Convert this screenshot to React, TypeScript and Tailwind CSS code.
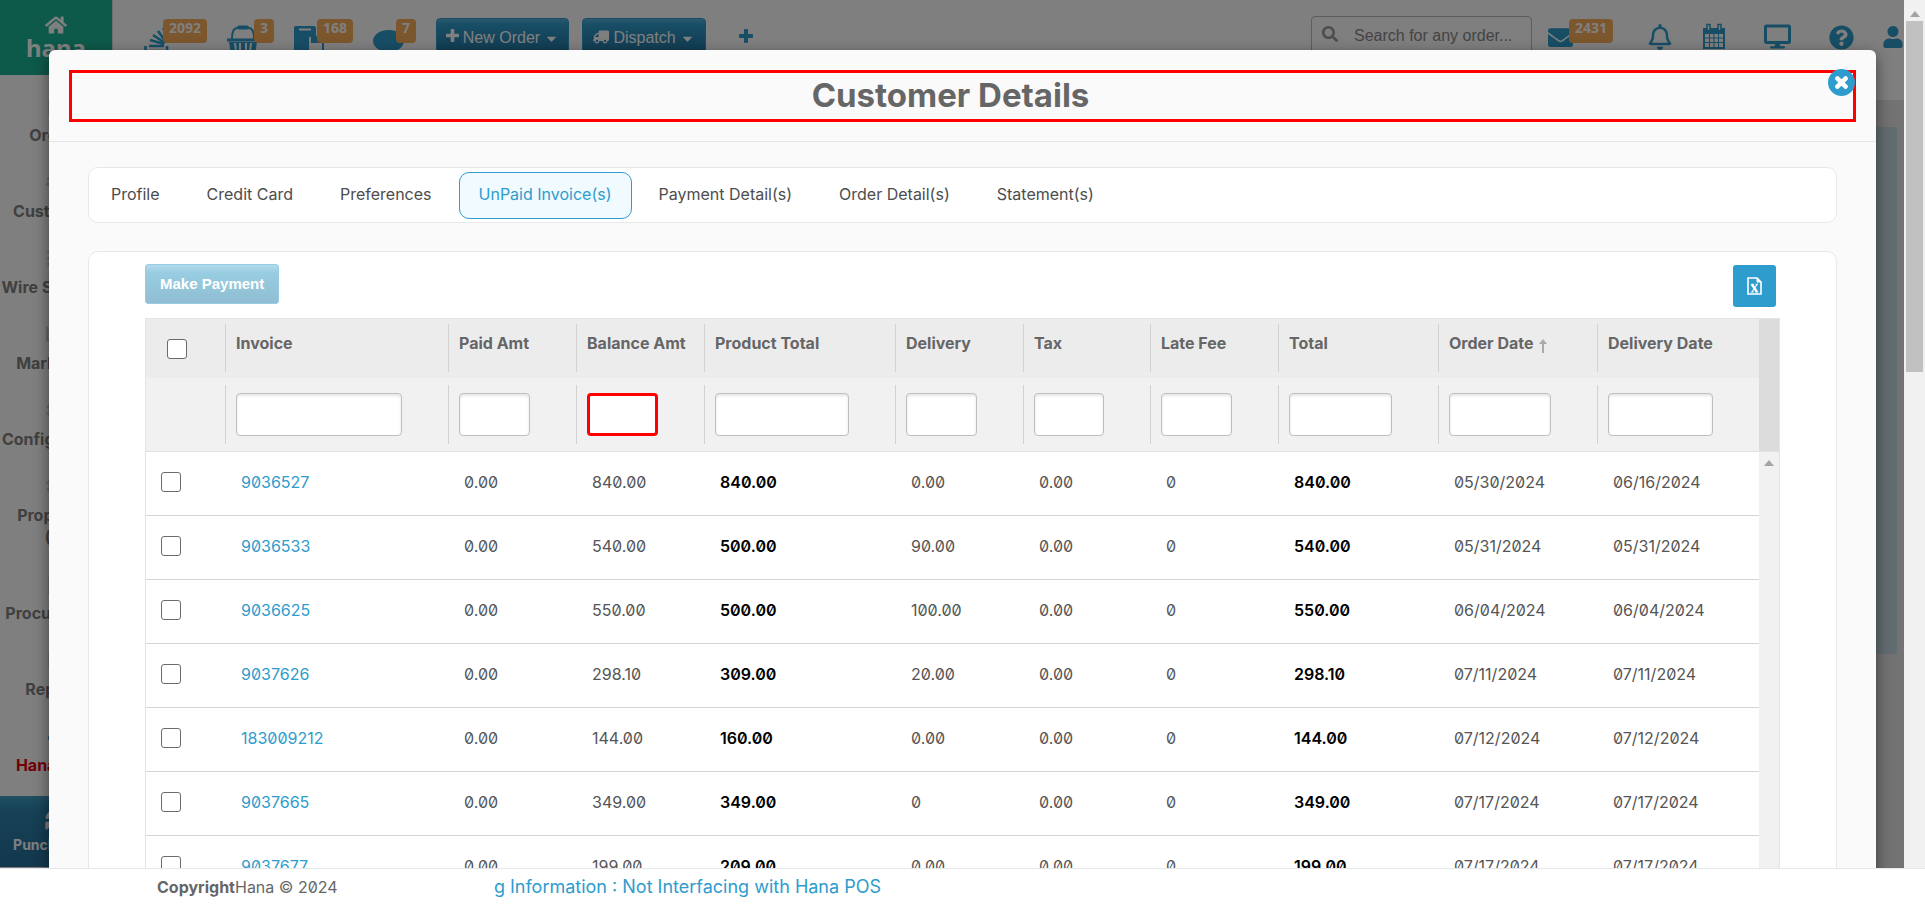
import type { ReactNode } from 'react'
import {
  FaBars,
  FaBuilding,
  FaCaretDown,
  FaChartBar,
  FaClipboardList,
  FaCloud,
  FaCog,
  FaDesktop,
  FaEnvelope,
  FaFileInvoice,
  FaHome,
  FaQuestionCircle,
  FaRegBell,
  FaSearch,
  FaSyncAlt,
  FaTimes,
  FaTruck,
  FaUser,
  FaUsers,
} from 'react-icons/fa'

type Row = {
  invoice: string
  paid: string
  balance: string
  product: string
  delivery: string
  tax: string
  late: string
  total: string
  ordered: string
  delivered: string
}

const rows: Row[] = [
  { invoice: '9036527', paid: '0.00', balance: '840.00', product: '840.00', delivery: '0.00', tax: '0.00', late: '0', total: '840.00', ordered: '05/30/2024', delivered: '06/16/2024' },
  { invoice: '9036533', paid: '0.00', balance: '540.00', product: '500.00', delivery: '90.00', tax: '0.00', late: '0', total: '540.00', ordered: '05/31/2024', delivered: '05/31/2024' },
  { invoice: '9036625', paid: '0.00', balance: '550.00', product: '500.00', delivery: '100.00', tax: '0.00', late: '0', total: '550.00', ordered: '06/04/2024', delivered: '06/04/2024' },
  { invoice: '9037626', paid: '0.00', balance: '298.10', product: '309.00', delivery: '20.00', tax: '0.00', late: '0', total: '298.10', ordered: '07/11/2024', delivered: '07/11/2024' },
  { invoice: '183009212', paid: '0.00', balance: '144.00', product: '160.00', delivery: '0.00', tax: '0.00', late: '0', total: '144.00', ordered: '07/12/2024', delivered: '07/12/2024' },
  { invoice: '9037665', paid: '0.00', balance: '349.00', product: '349.00', delivery: '0', tax: '0.00', late: '0', total: '349.00', ordered: '07/17/2024', delivered: '07/17/2024' },
  { invoice: '9037677', paid: '0.00', balance: '199.00', product: '209.00', delivery: '0.00', tax: '0.00', late: '0', total: '199.00', ordered: '07/17/2024', delivered: '07/17/2024' },
]

const columns = [
  { label: 'Invoice', col: 'w-[223px]' },
  { label: 'Paid Amt', col: 'w-[128px]' },
  { label: 'Balance Amt', col: 'w-[128px]' },
  { label: 'Product Total', col: 'w-[191px]' },
  { label: 'Delivery', col: 'w-[128px]' },
  { label: 'Tax', col: 'w-[127px]' },
  { label: 'Late Fee', col: 'w-[128px]' },
  { label: 'Total', col: 'w-[160px]' },
  { label: 'Order Date', col: 'w-[159px]' },
  { label: 'Delivery Date', col: 'w-[162px]' },
]

const tabs = ['Profile', 'Credit Card', 'Preferences', 'UnPaid Invoice(s)', 'Payment Detail(s)', 'Order Detail(s)', 'Statement(s)']

const menu = [
  { label: 'Orders', icon: <FaClipboardList /> },
  { label: 'Customers', icon: <FaUsers /> },
  { label: 'Wire Services', icon: <FaBars /> },
  { label: 'Marketing', icon: <FaChartBar /> },
  { label: 'Configuration', icon: <FaCog /> },
  { label: 'Proposals (3)', icon: <FaCog /> },
  { label: 'Procurement', icon: <FaBuilding /> },
  { label: 'Reports', icon: <FaFileInvoice /> },
]

function Badge({ children }: { children: ReactNode }) {
  return (
    <span className="absolute top-[19px] h-6 rounded bg-[#f8ac59] px-[6px] font-['Open_Sans',sans-serif] text-sm leading-[18px] font-bold text-white">
      {children}
    </span>
  )
}

function PlusIcon({ className }: { className: string }) {
  return (
    <svg viewBox="0 0 14 14" className={className} fill="currentColor">
      <path d="M5 1q0-1 1-1h2q1 0 1 1v4h4q1 0 1 1v2q0 1-1 1H9v4q0 1-1 1H6q-1 0-1-1V9H1Q0 9 0 8V6q0-1 1-1h4z" />
    </svg>
  )
}

function Check({ label }: { label: string }) {
  return (
    <input
      type="checkbox"
      aria-label={label}
      className="block size-5 appearance-none rounded-[3px] border border-[#6b6b6b] bg-white checked:bg-[#2e9ccc]"
    />
  )
}

function OpenOrdersIcon() {
  return (
    <svg viewBox="0 0 26 26" className="h-[26px] w-[26px]" fill="none" stroke="#2e9ccc" strokeWidth="2.6">
      <path d="M1.5 19v7M23 19v7M5 19h15M5 24h15M6 13l14 4M9 8l12 8M14 4l8 11M19 1l5 8" />
    </svg>
  )
}

function BasketIcon() {
  return (
    <svg viewBox="0 0 34 30" className="h-[30px] w-[34px]" fill="none" stroke="#2e9ccc">
      <path d="M6 14C6 5 8 3 11 3h3M28 14c0-9-2-11-5-11h-3" strokeWidth="2" />
      <path d="M13 2.5h8" strokeWidth="4" strokeLinecap="round" />
      <path d="M1 13.5h32v3H1zM3 17h28l-2 13H5z" fill="#2e9ccc" stroke="none" />
      <path d="M9 18l1 9M14 18v9M20 18v9M25 18l-1 9" stroke="#fff" strokeWidth="2" />
    </svg>
  )
}

function StoreIcon() {
  return (
    <svg viewBox="0 0 30 30" className="h-[30px] w-[30px]">
      <path d="M2 0h18q2 0 2 2v8h4l4 5v15H0V2q0-2 2-2z" fill="#2e9ccc" />
      <path d="M5 2.5h12v2H5zM15 11h2v6h11v9H15z" fill="#fff" />
    </svg>
  )
}

function CalendarIcon() {
  return (
    <svg viewBox="0 0 24 26" className="h-[26px] w-6">
      <path d="M1 5h22v21H1z" fill="#2e9ccc" />
      <path d="M5 1.5h3v6H5zM16 1.5h3v6h-3z" fill="#fff" stroke="#2e9ccc" strokeWidth="1.5" />
      <path d="M3 11h4v3.500H3zM8 11h3.500v3.500H8zM12.500 11H16v3.500h-3.500zM17 11h4v3.500h-4zM3 15.500h4V19H3zM8 15.500h3.500V19H8zM12.500 15.500H16V19h-3.500zM17 15.500h4V19h-4zM3 20h4v4H3zM8 20h3.500v4H8zM12.500 20H16v4h-3.500zM17 20h4v4h-4z" fill="#fff" />
    </svg>
  )
}

function ExcelIcon() {
  return (
    <svg viewBox="0 0 15 18" className="h-[18px] w-[15px]" fill="none" stroke="#fff">
      <path d="M1 1h9l4 4v12H1z" strokeWidth="1.600" />
      <path d="M10 1v4h4z" fill="#fff" />
      <path d="M5 7.500l5 7.500" strokeWidth="2.400" />
      <path d="M10 7.500L5 15M3.800 7.200h3M8.500 7.200h2.500M3.800 15h3M8.500 15h2.800" strokeWidth="1.100" />
    </svg>
  )
}

function TopBar() {
  const action =
    "absolute top-[18px] flex h-10 items-start gap-1 rounded-[4px] border border-[#2e9ccc] bg-linear-to-b from-[#55b3d9] via-[#2e9ccc] via-15% to-[#24709a] pt-[7px] font-['Liberation_Sans',Arial,sans-serif] text-base text-white"
  return (
    <header className="flex h-[100px] shrink-0 bg-white text-[#2e9ccc]">
      <a href="#home" className="flex h-[75px] w-28 flex-col items-center bg-[#1ab394] pt-[14px] text-white">
        <FaHome size={22} />
        <span className="font-['Noto_Sans',sans-serif] text-2xl leading-6 font-bold">hana</span>
      </a>
      <nav aria-label="Queues" className="relative flex-1 border-l border-[#ddd]">
        <a href="#open" aria-label="Open orders" className="absolute top-[27px] left-[31px]"><OpenOrdersIcon /></a>
        <span className="absolute left-[50px]"><Badge>2092</Badge></span>
        <a href="#basket" aria-label="Basket" className="absolute top-[25px] left-[113px]"><BasketIcon /></a>
        <span className="absolute left-[141px]"><Badge>3</Badge></span>
        <a href="#store" aria-label="Store" className="absolute top-[26px] left-[181px]"><StoreIcon /></a>
        <span className="absolute left-[204px]"><Badge>168</Badge></span>
        <a href="#chat" aria-label="Chats" className="absolute top-[30px] left-[260px] h-[22px] w-[31px] rounded-[50%] bg-[#2e9ccc]" />
        <span className="absolute left-[283px]"><Badge>7</Badge></span>
        <button type="button" className={`${action} left-[323px] w-[133px] justify-center`}>
          <PlusIcon className="mt-[3px] size-[13px]" />New Order<FaCaretDown size={15} className="mt-[5px]" />
        </button>
        <button type="button" className={`${action} left-[469px] w-[124px] justify-center`}>
          <FaTruck size={16} className="mt-[3px] -scale-x-100" />Dispatch<FaCaretDown size={15} className="mt-[5px]" />
        </button>
        <button type="button" aria-label="Add" className="absolute top-[29px] left-[626px]"><PlusIcon className="size-[14px]" /></button>
      </nav>
      <div className="relative w-[593px] shrink-0">
        <label className="absolute top-4 left-0 flex h-10 w-[221px] items-center gap-4 rounded border border-[#bbb] pl-[10px] text-[#999]">
          <FaSearch size={16} className="mb-1" />
          <input aria-label="Search" placeholder="Search for any order..." className="w-[170px] font-['Liberation_Sans',Arial,sans-serif] text-base outline-none placeholder:text-[#888]" />
        </label>
        <FaEnvelope size={25} className="absolute top-[25px] left-[237px]" />
        <span className="absolute left-[258px]"><Badge>2431</Badge></span>
        <FaRegBell size={26} className="absolute top-6 left-[336px]" />
        <span className="absolute top-[23px] left-[391px]"><CalendarIcon /></span>
        <FaDesktop size={27} className="absolute top-[23px] left-[453px]" />
        <FaQuestionCircle size={25} className="absolute top-[25px] left-[518px]" />
        <FaUser size={22} className="absolute top-[26px] left-[571px]" />
      </div>
    </header>
  )
}

function SideMenu() {
  return (
    <nav aria-label="Main" className="-mt-6 flex w-28 shrink-0 flex-col text-center text-base leading-[22px] font-bold text-[#808080]">
      {menu.map((item) => (
        <a key={item.label} href="#section" className="flex flex-col items-center gap-1 pt-4 pb-[6px] whitespace-nowrap">
          <span className="flex h-7 items-center text-xl text-[#d0d0d0]">{item.icon}</span>
          {item.label.split(' (').map((part, i) => (
            <span key={part} className={i ? '-mt-1' : ''}>{i ? `(${part}` : part}</span>
          ))}
        </a>
      ))}
      <a href="#help" className="flex flex-col items-center gap-1 pt-4 pb-5 text-[#e6000c]">
        <span className="flex h-7 items-center text-base text-[#2e9ccc]"><FaCloud /></span>
        Hana Help
      </a>
      <button type="button" className="flex h-[71px] flex-col items-center justify-center gap-1 bg-linear-to-b from-[#3fa0c4] via-[#2e84ac] via-20% to-[#256f9c] text-sm font-bold text-white">
        <FaSyncAlt size={22} />
        Punch Clock
      </button>
    </nav>
  )
}

function InvoiceTable() {
  return (
    <div className="mt-[11px] flex border border-[#e4e4e4]">
      <table className="w-full table-fixed border-separate border-spacing-0 text-left text-[#555] slashed-zero">
        <colgroup>
          <col className="w-[79px]" />
          {columns.map((c) => (
            <col key={c.label} className={c.col} />
          ))}
        </colgroup>
        <thead>
          <tr className="bg-[#ececec]">
            <th className="h-[59px] py-[5px] pl-[21px] align-middle"><Check label="Select all invoices" /></th>
            {columns.map((c) => (
              <th key={c.label} className="py-[5px] align-top text-base font-bold whitespace-nowrap text-[#666]">
                <div className="flex h-12 border-l border-[#d2d2d2] pt-2 pl-[10px] leading-[22px]">
                  {c.label}
                  {c.label === 'Order Date' && (
                    <svg viewBox="0 0 8 14" className="mt-[7px] ml-[6px] h-[14px] w-2" fill="#aaa">
                      <path d="M4 0l4 5H5v9H3V5H0z" />
                    </svg>
                  )}
                </div>
              </th>
            ))}
          </tr>
          <tr className="bg-[#f1f1f1]">
            <td className="border-b border-[#e2e2e2]" />
            {columns.map((c) => (
              <td key={c.label} className="border-b border-[#e2e2e2] py-[7px]">
                <div className="h-[59px] border-l border-[#d2d2d2] pt-2 pr-[46px] pl-[10px]">
                  <input
                    aria-label={`Filter ${c.label}`}
                    className={
                      c.label === 'Balance Amt'
                        ? 'block h-[43px] w-full rounded border-3 border-[#ff0000] bg-white px-2 outline-none'
                        : 'block h-[43px] w-full rounded border border-[#bfbfbf] bg-white px-2 inset-shadow-[0_2px_3px_#0000001a] outline-none'
                    }
                  />
                </div>
              </td>
            ))}
          </tr>
        </thead>
        <tbody className="[&_td]:h-16 [&_td]:border-b [&_td]:border-[#d4d4d4] [&_td]:pb-1 [&_td]:pl-4 [&_td:first-child]:pl-[15px]">
          {rows.map((r) => (
            <tr key={r.invoice}>
              <td><Check label={`Select invoice ${r.invoice}`} /></td>
              <td><a href="#invoice" className="text-[#2e9ccc]">{r.invoice}</a></td>
              <td>{r.paid}</td>
              <td>{r.balance}</td>
              <td className="font-semibold text-black">{r.product}</td>
              <td>{r.delivery}</td>
              <td>{r.tax}</td>
              <td>{r.late}</td>
              <td className="font-semibold text-black">{r.total}</td>
              <td>{r.ordered}</td>
              <td>{r.delivered}</td>
            </tr>
          ))}
        </tbody>
      </table>
      <div className="flex w-5 shrink-0 flex-col bg-[#f1f1f1]">
        <div className="h-[133px] border-b border-[#e2e2e2] bg-[#dcdcdc]" />
        <svg viewBox="0 0 10 6" className="mt-2 h-[6px] w-[10px] self-center" fill="#a3a3a3"><path d="M5 0l5 6H0z" /></svg>
      </div>
    </div>
  )
}

function CustomerDialog() {
  return (
    <section role="dialog" aria-label="Customer Details" className="relative mt-[50px] mr-7 ml-[49px] rounded-t-md bg-[#fafafa] shadow-[0_5px_15px_#00000080]">
      <div className="border-b border-[#e5e5e5] px-5 pt-5 pb-[19px]">
        <h1 className="flex h-[52px] items-center justify-center border-3 border-[#ff0000] pr-6 text-[33px] font-bold text-[#666]">
          Customer Details
        </h1>
      </div>
      <button type="button" aria-label="Close" className="absolute top-[19px] right-[21px] flex size-[27px] items-center justify-center rounded-full bg-[#2e9ccc] text-white">
        <FaTimes size={17} stroke="white" strokeWidth={40} />
      </button>
      <div className="px-[39px] pt-[25px]">
        <div role="tablist" className="flex h-14 items-center gap-[7px] rounded-[10px] border border-[#e8e8e8] bg-white px-[2px]">
          {tabs.map((t) => (
            <button
              key={t}
              type="button"
              role="tab"
              aria-selected={t === 'UnPaid Invoice(s)'}
              className={
                t === 'UnPaid Invoice(s)'
                  ? 'h-[47px] rounded-[10px] border border-[#2e9ccc] bg-[#f0faff] px-[19px] pb-[2px] text-base text-[#2e9ccc]'
                  : 'h-[47px] rounded-[10px] border border-transparent px-[19px] pb-[2px] text-base text-[#4d4d4d]'
              }
            >
              {t}
            </button>
          ))}
        </div>
        <div className="mt-7 rounded-t-[10px] border border-[#e8e8e8] bg-white px-14 pt-3">
          <div className="flex items-start justify-between pr-1">
            <button type="button" className="h-10 rounded-[3px] border border-[#95cbe3] bg-linear-to-b from-[#b3dbeb] via-[#98cde2] via-20% to-[#90bdd1] px-[14px] font-['Liberation_Sans',Arial,sans-serif] text-[15px] font-bold text-white">
              Make Payment
            </button>
            <button type="button" aria-label="Export to Excel" className="mt-px flex h-[42px] w-[43px] items-center justify-center rounded-[3px] bg-[#2e9ccc]">
              <ExcelIcon />
            </button>
          </div>
          <InvoiceTable />
        </div>
      </div>
    </section>
  )
}

export default function App() {
  return (
    <div className="flex h-screen flex-col overflow-hidden bg-white font-[Inter,sans-serif]">
      <div className="flex min-h-0 flex-1">
        <div className="relative flex min-w-0 flex-1 flex-col overflow-hidden">
          <TopBar />
          <div className="flex min-h-0 flex-1">
            <SideMenu />
            <main className="flex-1 bg-[#e6e6e6] pt-[27px] pr-[7px]">
              <div className="h-[527px] bg-[#c4dbe5]" />
            </main>
          </div>
          <div className="absolute inset-0 overflow-hidden bg-black/50">
            <CustomerDialog />
          </div>
        </div>
        <div className="flex w-[21px] shrink-0 flex-col items-center bg-[#f1f1f1] pt-[11px]">
          <svg viewBox="0 0 10 6" className="h-[6px] w-[10px]" fill="#a3a3a3"><path d="M5 0l5 6H0z" /></svg>
          <div className="mt-1 h-[351px] w-[17px] bg-[#c1c1c1]" />
        </div>
      </div>
      <footer className="flex h-9 shrink-0 items-center border-t border-[#e4e8ea] bg-white pl-[157px] text-[#666] slashed-zero">
        <p className="w-[336px] text-base"><strong>Copyright</strong>Hana © 2024</p>
        <p className="flex w-[388px] justify-end overflow-hidden text-lg whitespace-nowrap text-[#2e9ccc]">
          Billing Information : Not Interfacing with Hana POS
        </p>
      </footer>
    </div>
  )
}
